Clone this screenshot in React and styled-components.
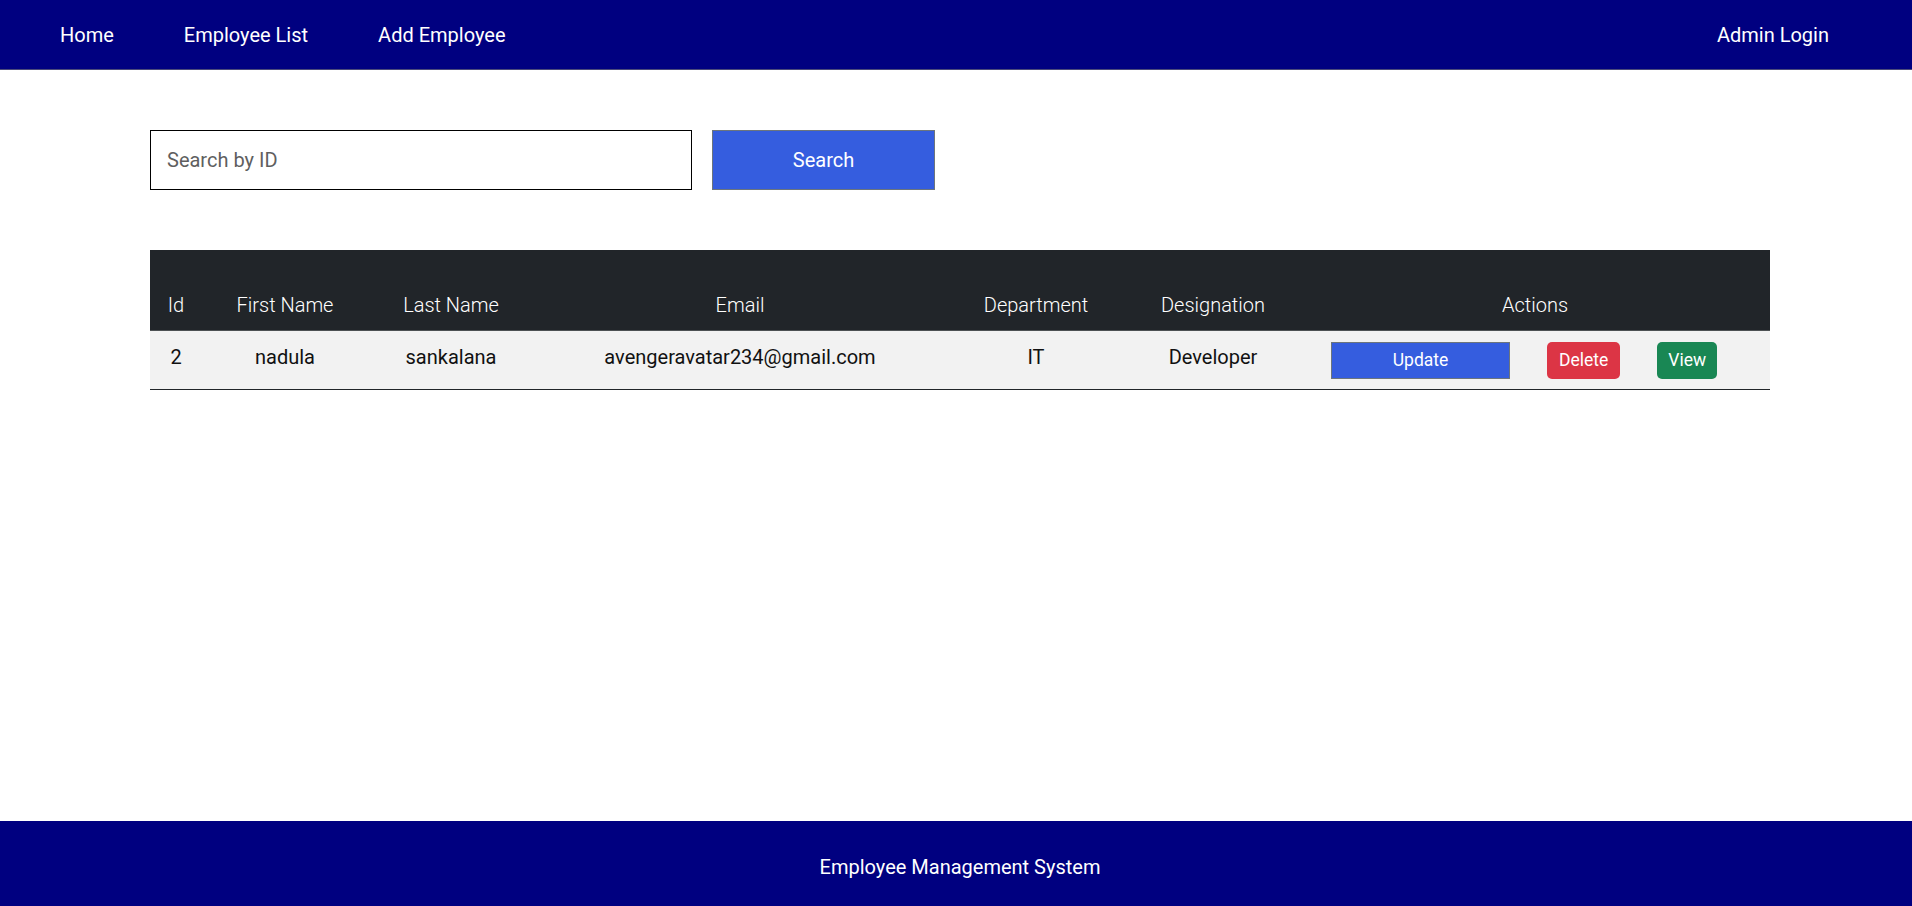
import React from 'react';
import styled, { createGlobalStyle, css } from 'styled-components';

const GlobalStyle = createGlobalStyle`
    * {
        box-sizing: border-box;
    }

    body {
        margin: 0;
        font-family: Roboto, "Liberation Sans", sans-serif;
        color: #212529;
        background: #ffffff;
    }
`;

const Page = styled.div`
    display: flex;
    flex-direction: column;
    min-height: 100vh;
`;

const NavBar = styled.header`
    display: flex;
    align-items: center;
    justify-content: space-between;
    height: 70px;
    padding: 0 48px 0 25px;
    background-color: #000080;
    border-bottom: 1px solid #4a4a7a;
`;

const NavGroup = styled.nav`
    display: flex;
    align-items: center;
`;

const NavLink = styled.a`
    padding: 0 35px;
    font-size: 20px;
    line-height: 24px;
    color: #ffffff;
    text-decoration: none;
    cursor: pointer;
`;

const Main = styled.main`
    flex: 1;
    padding: 60px 0 0 150px;
`;

const SearchRow = styled.div`
    display: flex;
    gap: 20px;
`;

const SearchInput = styled.input`
    width: 542px;
    height: 60px;
    padding: 0 16px;
    border: 1px solid #000000;
    border-radius: 0;
    font-family: inherit;
    font-size: 20px;
    color: #212529;
    outline: none;

    &::placeholder {
        color: #5f5f5f;
    }
`;

const SearchButton = styled.button`
    width: 223px;
    height: 60px;
    border: 1px solid #6c757d;
    background-color: #355ddf;
    color: #ffffff;
    font-family: inherit;
    font-size: 20px;
    cursor: pointer;
`;

const Table = styled.table`
    width: 1620px;
    margin-top: 60px;
    border-collapse: collapse;
    table-layout: fixed;
    text-align: center;
`;

const HeadCell = styled.th`
    padding: 43px 4px 13px;
    background-color: #212529;
    border-bottom: 1px solid #4d5154;
    color: #ffffff;
    font-size: 20px;
    font-weight: 300;
    line-height: 24px;
`;

const Row = styled.tr`
    background-color: #f2f2f2;
    border-bottom: 1px solid #212529;
`;

const Cell = styled.td`
    height: 59px;
    padding: 0 4px 6px;
    font-size: 20px;
    line-height: 24px;
    color: #111111;
`;

const ActionCell = styled.td`
    padding: 0;
`;

const ActionGroup = styled.div`
    display: flex;
    align-items: center;
    gap: 37px;
    padding: 1px 0 0 31px;
`;

const ActionButton = styled.button`
    height: 37px;
    padding: 0 11px;
    border: 1px solid transparent;
    border-radius: 5px;
    color: #ffffff;
    font-family: inherit;
    font-size: 17.5px;
    line-height: 25px;
    cursor: pointer;

    ${(props) => props.variant === 'update' &&
    css`
        width: 179px;
        border-radius: 0;
        border-color: #6c757d;
        background-color: #355ddf;
    `}

    ${(props) => props.variant === 'delete' &&
    css`
        background-color: #dc3545;
    `}

    ${(props) => props.variant === 'view' &&
    css`
        padding: 0 10px;
        background-color: #198754;
    `}
`;

const Footer = styled.footer`
    display: flex;
    align-items: center;
    justify-content: center;
    height: 85px;
    padding: 6px 0 0 8px;
    background-color: #000080;
    color: #ffffff;
    font-size: 20px;
`;

const columns = [
    { label: 'Id', width: 52 },
    { label: 'First Name', width: 166 },
    { label: 'Last Name', width: 166 },
    { label: 'Email', width: 412 },
    { label: 'Department', width: 180 },
    { label: 'Designation', width: 174 },
    { label: 'Actions', width: 470 },
];

const employees = [
    {
        id: 2,
        firstName: 'nadula',
        lastName: 'sankalana',
        email: 'avengeravatar234@gmail.com',
        department: 'IT',
        designation: 'Developer',
    },
];

const App = () => {
    return (
        <Page>
            <GlobalStyle />
            <NavBar>
                <NavGroup>
                    <NavLink>Home</NavLink>
                    <NavLink>Employee List</NavLink>
                    <NavLink>Add Employee</NavLink>
                </NavGroup>
                <NavGroup>
                    <NavLink>Admin Login</NavLink>
                </NavGroup>
            </NavBar>

            <Main>
                <SearchRow>
                    <SearchInput placeholder="Search by ID" />
                    <SearchButton>Search</SearchButton>
                </SearchRow>

                <Table>
                    <colgroup>
                        {columns.map((col) => (
                            <col key={col.label} style={{ width: col.width }} />
                        ))}
                    </colgroup>
                    <thead>
                        <tr>
                            {columns.map((col) => (
                                <HeadCell key={col.label}>{col.label}</HeadCell>
                            ))}
                        </tr>
                    </thead>
                    <tbody>
                        {employees.map((emp) => (
                            <Row key={emp.id}>
                                <Cell>{emp.id}</Cell>
                                <Cell>{emp.firstName}</Cell>
                                <Cell>{emp.lastName}</Cell>
                                <Cell>{emp.email}</Cell>
                                <Cell>{emp.department}</Cell>
                                <Cell>{emp.designation}</Cell>
                                <ActionCell>
                                    <ActionGroup>
                                        <ActionButton variant="update">Update</ActionButton>
                                        <ActionButton variant="delete">Delete</ActionButton>
                                        <ActionButton variant="view">View</ActionButton>
                                    </ActionGroup>
                                </ActionCell>
                            </Row>
                        ))}
                    </tbody>
                </Table>
            </Main>

            <Footer>Employee Management System</Footer>
        </Page>
    );
};

export default App;
